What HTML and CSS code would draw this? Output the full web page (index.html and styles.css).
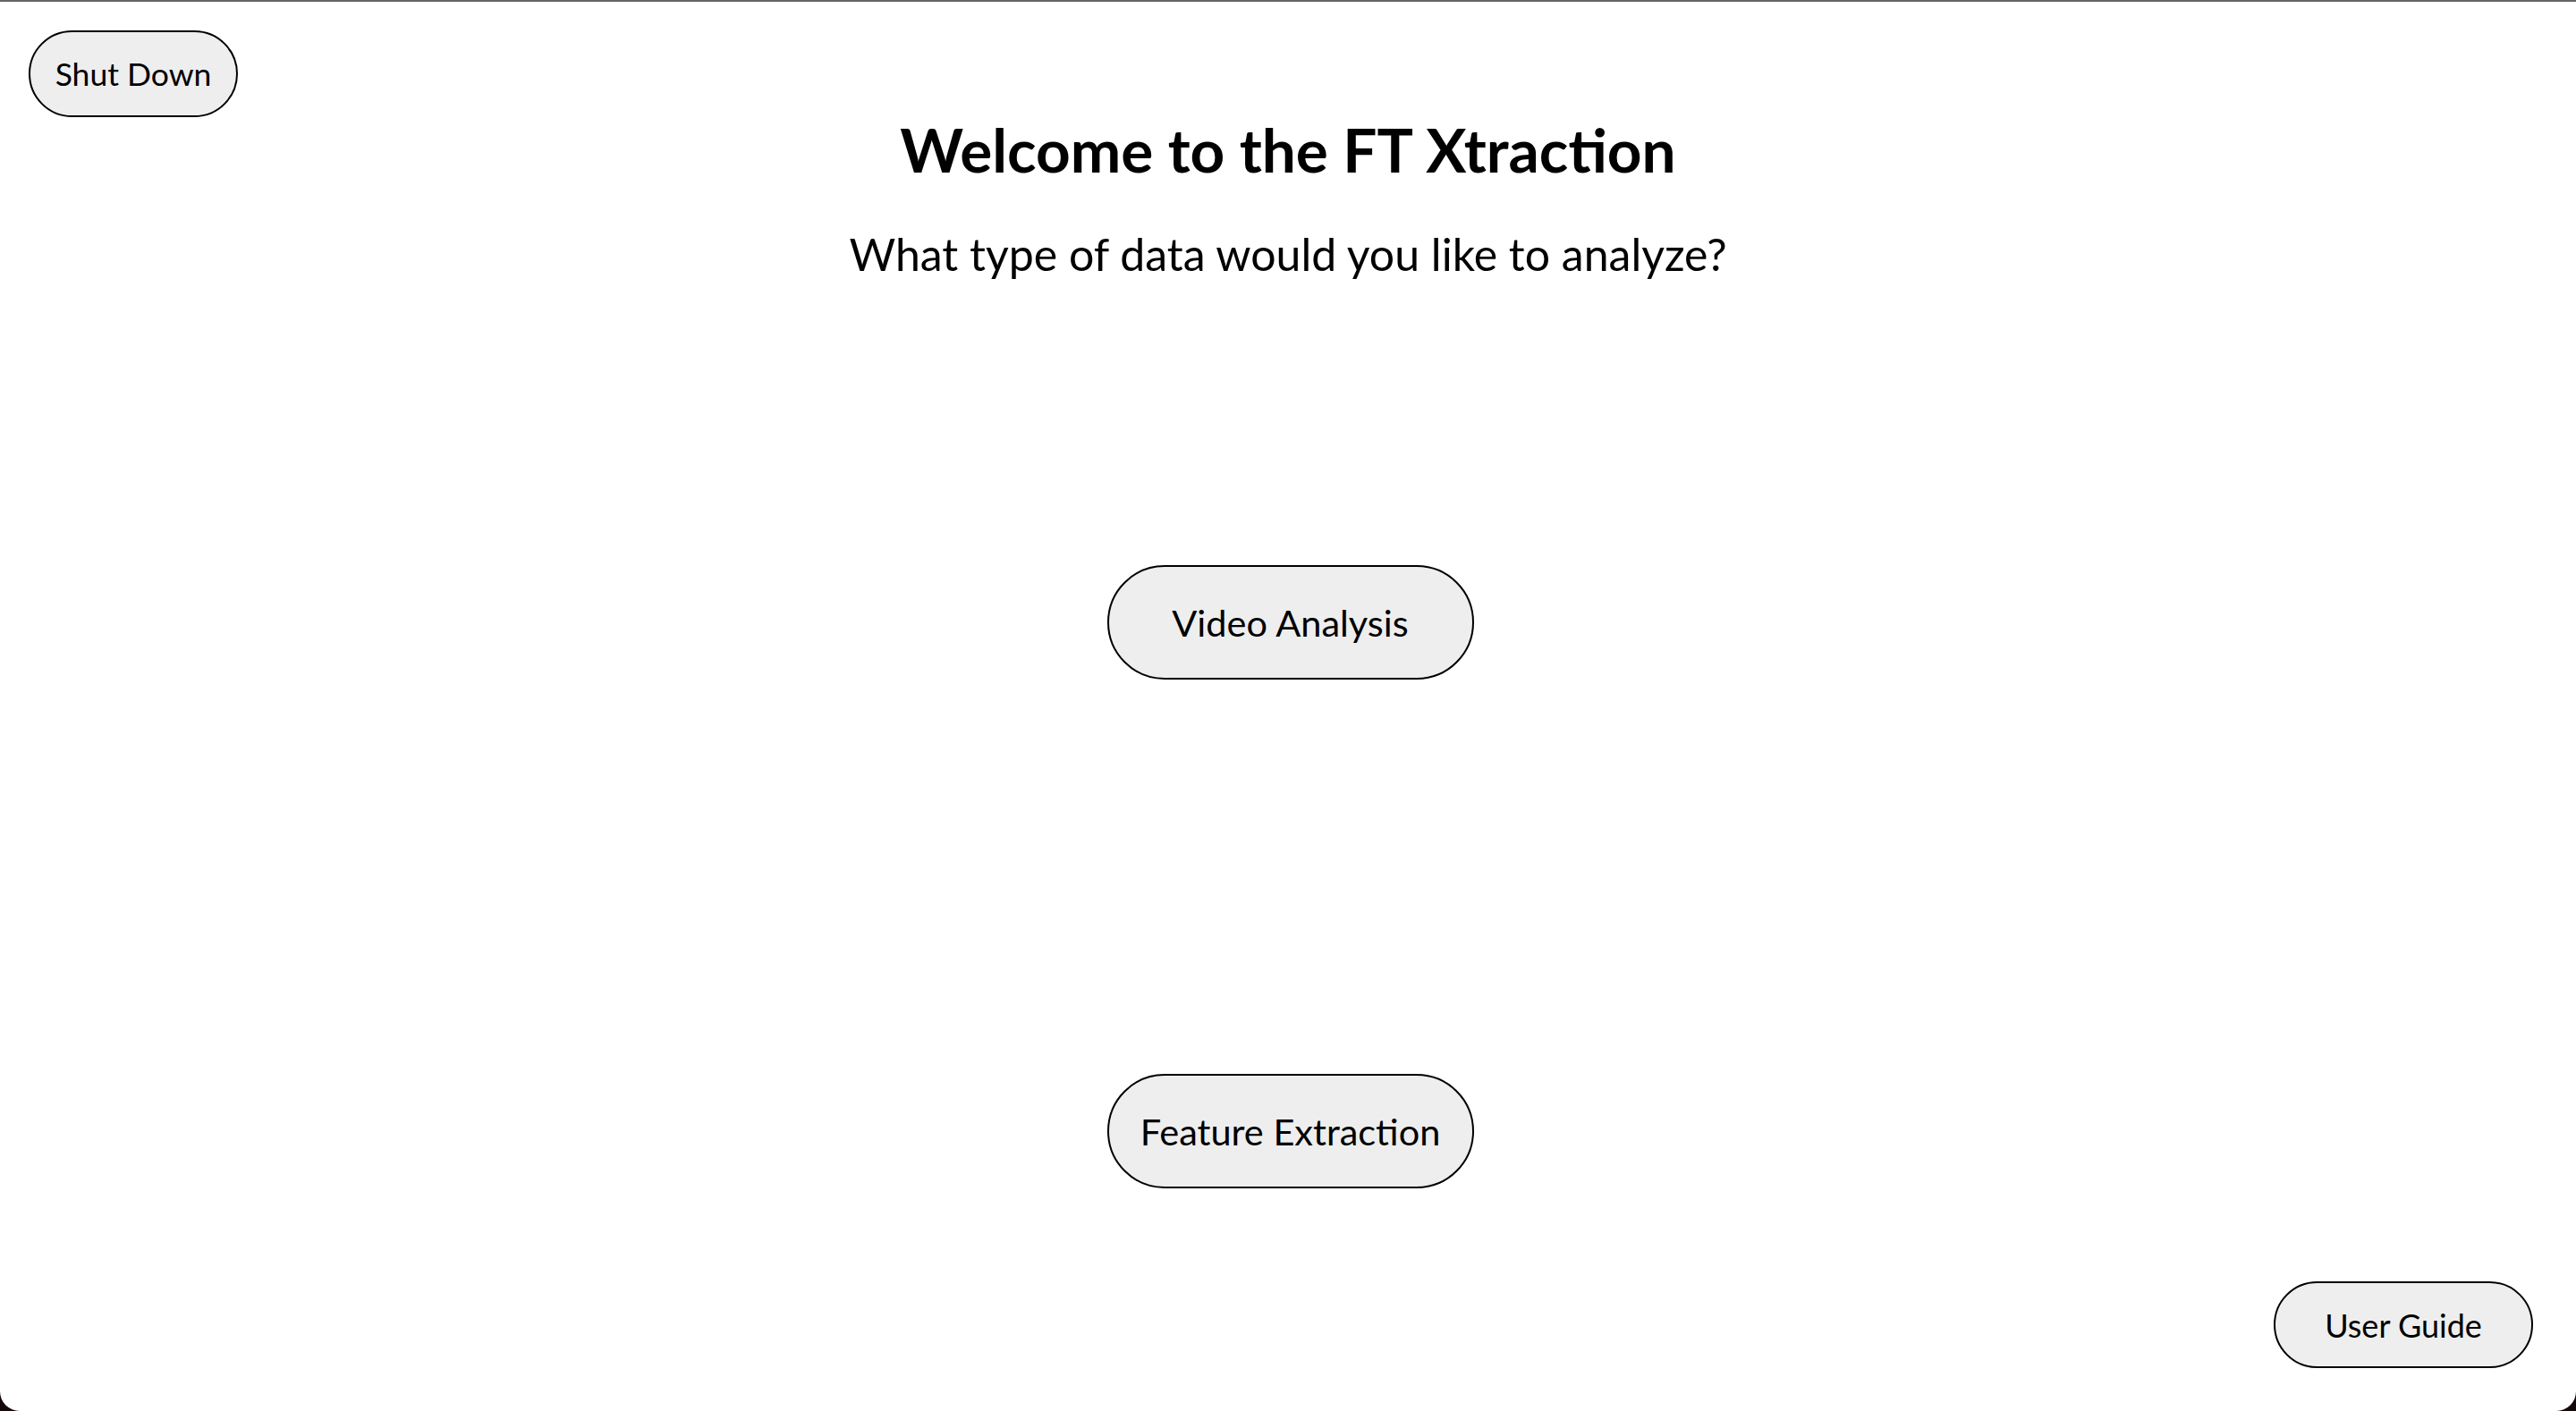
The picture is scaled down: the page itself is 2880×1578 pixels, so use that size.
FILE: index.html
```html
<!DOCTYPE html>
<html lang="en">
<head>
<meta charset="utf-8">
<title>FT Xtraction</title>
<link rel="stylesheet" href="styles.css">
</head>
<body>
<div class="window">
  <div class="top-row">
    <button class="btn btn-small btn-shutdown">Shut Down</button>
  </div>
  <header class="header">
    <h1 class="title">Welcome to the FT Xtraction</h1>
    <p class="subtitle">What type of data would you like to analyze?</p>
  </header>
  <main class="choices">
    <button class="btn btn-large btn-video">Video Analysis</button>
    <button class="btn btn-large btn-feature">Feature Extraction</button>
  </main>
  <footer class="bottom-row">
    <button class="btn btn-small btn-guide">User Guide</button>
  </footer>
</div>
</body>
</html>
```

FILE: styles.css
```css
html, body {
  margin: 0;
  padding: 0;
  height: 100%;
}

body {
  background: #140808;
  font-family: Lato, "Open Sans", sans-serif;
  color: #000;
}

.window {
  box-sizing: border-box;
  height: 100vh;
  background: #ffffff;
  border-top: 2px solid #666666;
  border-radius: 0 0 22px 22px;
  padding: 32px 32px 48px 32px;
  display: flex;
  flex-direction: column;
}

.top-row {
  display: flex;
  justify-content: flex-start;
}

.btn {
  box-sizing: border-box;
  font-family: Lato, "Open Sans", sans-serif;
  color: #000;
  background: #eeeeee;
  border: 2px solid #000;
  border-radius: 999px;
  display: flex;
  align-items: center;
  justify-content: center;
  padding: 0;
  cursor: pointer;
  white-space: nowrap;
}

.btn-small {
  height: 97px;
  font-size: 36px;
}

.btn-shutdown {
  width: 234px;
  font-size: 35.5px;
}

.btn-guide {
  width: 290px;
}

.btn-large {
  width: 410px;
  height: 128px;
  font-size: 41.5px;
}

.header {
  display: flex;
  flex-direction: column;
  align-items: center;
  margin-top: 2px;
}

.title {
  margin: 0;
  font-size: 67.5px;
  font-weight: 700;
  line-height: 1;
}

.subtitle {
  margin: 58px 0 0;
  font-size: 50px;
  font-weight: 400;
  line-height: 1;
}

.choices {
  flex: 1;
  display: flex;
  flex-direction: column;
  align-items: center;
  padding-top: 323px;
  padding-left: 5px;
  gap: 441px;
}

.bottom-row {
  display: flex;
  justify-content: flex-end;
  padding-right: 16px;
}
```
